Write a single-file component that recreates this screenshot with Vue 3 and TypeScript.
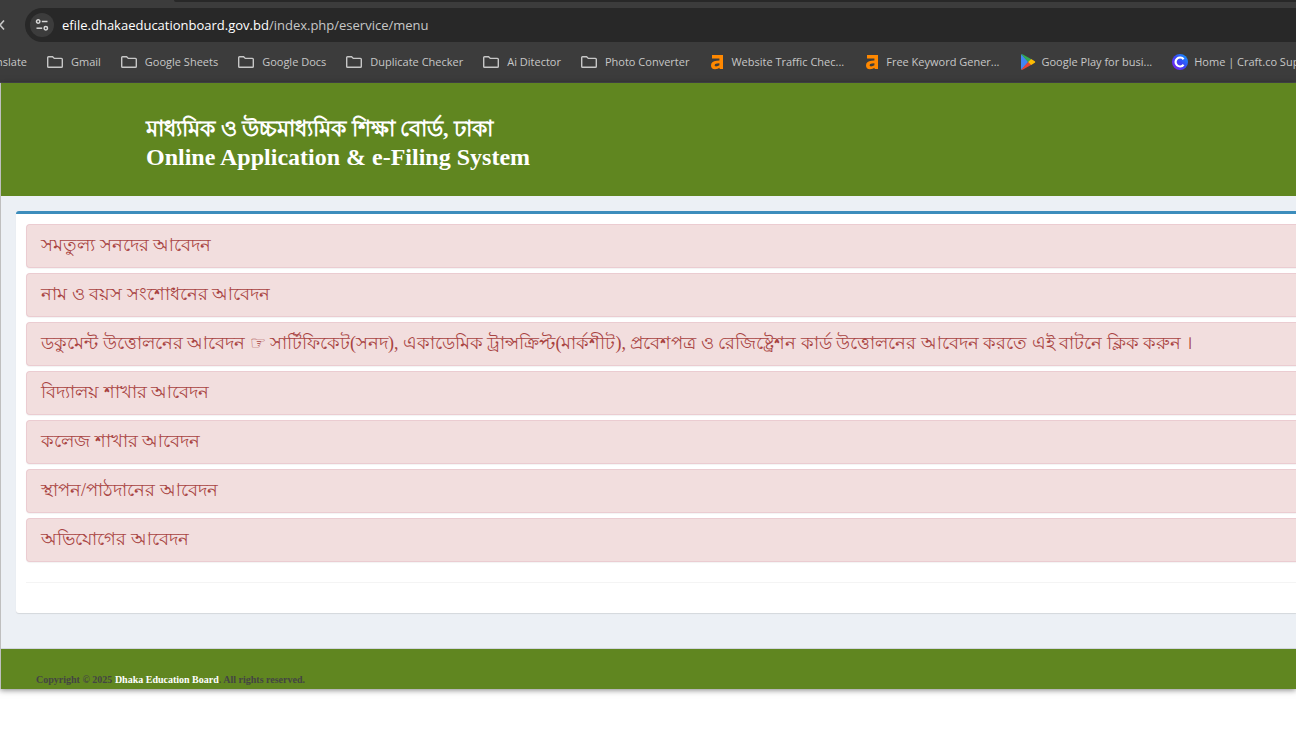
<script setup lang="ts">
type IconKind = 'folder' | 'ahrefs' | 'play' | 'craft'

interface Bookmark {
  label: string
  icon: IconKind
}

const bookmarks: Bookmark[] = [
  { label: 'Gmail', icon: 'folder' },
  { label: 'Google Sheets', icon: 'folder' },
  { label: 'Google Docs', icon: 'folder' },
  { label: 'Duplicate Checker', icon: 'folder' },
  { label: 'Ai Ditector', icon: 'folder' },
  { label: 'Photo Converter', icon: 'folder' },
  { label: 'Website Traffic Chec...', icon: 'ahrefs' },
  { label: 'Free Keyword Gener...', icon: 'ahrefs' },
  { label: 'Google Play for busi...', icon: 'play' },
  { label: 'Home | Craft.co Sup', icon: 'craft' },
]

const services: string[] = [
  'সমতুল্য সনদের আবেদন',
  'নাম ও বয়স সংশোধনের আবেদন',
  'ডকুমেন্ট উত্তোলনের আবেদন ☞ সার্টিফিকেট(সনদ), একাডেমিক ট্রান্সক্রিপ্ট(মার্কশীট), প্রবেশপত্র ও রেজিষ্ট্রেশন কার্ড উত্তোলনের আবেদন করতে এই বাটনে ক্লিক করুন ।',
  'বিদ্যালয় শাখার আবেদন',
  'কলেজ শাখার আবেদন',
  'স্থাপন/পাঠদানের আবেদন',
  'অভিযোগের আবেদন',
]
</script>

<template>
  <div class="screen">
    <div class="chrome">
      <div class="tabstrip"></div>
      <div class="toolbar">
        <button class="back" type="button" aria-label="Back">
          <svg width="6" height="12" viewBox="0 0 6 12"><path d="M4 1.5 L0 6 L4 10.5" /></svg>
        </button>
        <div class="omnibox">
          <button class="site-info" type="button" aria-label="Site information">
            <svg width="14" height="14" viewBox="0 0 14 14">
              <circle cx="3.2" cy="3.5" r="1.7" /><path d="M6.8 3.5 H12.5" />
              <circle cx="10.8" cy="10.2" r="1.7" /><path d="M1.5 10.2 H7.2" />
            </svg>
          </button>
          <span class="url">efile.dhakaeducationboard.gov.bd<span class="path">/index.php/eservice/menu</span></span>
        </div>
      </div>
      <nav class="bookmarks" aria-label="Bookmarks">
        <a class="bookmark" href="#">nslate</a>
        <a v-for="b in bookmarks" :key="b.label" class="bookmark" href="#">
          <svg v-if="b.icon === 'folder'" class="icon folder" viewBox="0 0 16 16">
            <path d="M1.5 2.7 H5.6 L7.3 4.4 H14.4 Q15.3 4.4 15.3 5.3 V12.4 Q15.3 13.3 14.4 13.3 H1.6 Q0.7 13.3 0.7 12.4 V3.5 Q0.7 2.7 1.5 2.7 Z" />
          </svg>
          <svg v-else-if="b.icon === 'ahrefs'" class="icon" viewBox="0 0 16 16">
            <path fill="#ff8800" fill-rule="evenodd" d="M3 1 H14 V15 H10.6 V13.8 Q9 15.2 6 15.2 Q2 15.2 2 11.6 Q2 7.2 7.5 6.8 L10.4 6.6 V4.4 H3 Z M10.4 9.3 L8 9.5 Q5.6 9.8 5.6 11.3 Q5.6 12.4 7 12.4 Q9 12.4 10.4 11.3 Z" />
          </svg>
          <svg v-else-if="b.icon === 'play'" class="icon" viewBox="0 0 16 16">
            <path fill="#4285f4" d="M1 1.6 Q1 0.6 1.8 0.2 L8.2 8 L1.8 15.8 Q1 15.4 1 14.4 Z" />
            <path fill="#34a853" d="M1.2 0.6 Q1.9 -0.2 3 0.4 L11.4 5.2 L8.2 8 Z" />
            <path fill="#ea4335" d="M1.2 15.4 Q1.9 16.2 3 15.6 L11.4 10.8 L8.2 8 Z" />
            <path fill="#fbbc04" d="M11.2 5.1 L14.8 7.2 Q15.8 8 14.8 8.8 L11.2 10.9 L8 8 Z" />
          </svg>
          <svg v-else class="icon" viewBox="0 0 16 16">
            <defs>
              <linearGradient id="craft" x1="1" y1="0" x2="0" y2="1">
                <stop offset="0" stop-color="#0aa0ff" />
                <stop offset="0.5" stop-color="#3b45f5" />
                <stop offset="1" stop-color="#8a1cf0" />
              </linearGradient>
            </defs>
            <circle cx="8" cy="8" r="8" fill="url(#craft)" />
            <path d="M11.6 5.2 A4.5 4.5 0 1 0 11.6 10.8" fill="none" stroke="#fff" stroke-width="2.2" />
          </svg>
          <span>{{ b.label }}</span>
        </a>
      </nav>
    </div>

    <div class="page">
      <header class="banner">
        <h1>মাধ্যমিক ও উচ্চমাধ্যমিক শিক্ষা বোর্ড, ঢাকা<br /><span class="latin">Online Application &amp; e-Filing System</span></h1>
      </header>
      <main class="content">
        <section class="box">
          <a v-for="s in services" :key="s" class="alert" href="#">{{ s }}</a>
          <hr />
        </section>
      </main>
      <footer class="footer">
        <strong>Copyright © 2025 <a href="#">Dhaka Education Board</a>. All rights reserved.</strong>
      </footer>
    </div>
  </div>
</template>

<style>
body {
  margin: 0;
  background: #fff;
}
</style>

<style scoped>
* {
  box-sizing: border-box;
}
.screen {
  min-height: 100vh;
  overflow: hidden;
}
a {
  text-decoration: none;
}
button {
  border: 0;
  padding: 0;
  background: none;
}
.chrome {
  background: #3c3c3c;
  border-bottom: 1px solid #4b4b50;
  font-family: "Open Sans", "Noto Sans", sans-serif;
  overflow: hidden;
}
.tabstrip {
  height: 2px;
  margin-left: 174px;
  background: #282828;
  border-bottom-left-radius: 4px;
}
.toolbar {
  display: flex;
  align-items: center;
  padding-top: 6px;
}
.back {
  width: 25px;
  height: 34px;
  display: flex;
  align-items: center;
}
.back svg {
  fill: none;
  stroke: #c7c7c7;
  stroke-width: 1.6;
}
.omnibox {
  flex: 1;
  height: 34px;
  display: flex;
  align-items: center;
  gap: 8px;
  padding-left: 5px;
  background: #282828;
  border-radius: 17px 0 0 17px;
}
.site-info {
  width: 24px;
  height: 24px;
  border-radius: 50%;
  background: #3c3c3c;
  display: flex;
  align-items: center;
  justify-content: center;
}
.site-info svg {
  fill: none;
  stroke: #d6d6d6;
  stroke-width: 1.5;
}
.url {
  font-size: 13px;
  line-height: 20px;
  color: #fff;
  white-space: nowrap;
}
.path {
  color: #c7c7c7;
}
.bookmarks {
  display: flex;
  align-items: center;
  gap: 20px;
  height: 40px;
  margin-left: -4px;
  white-space: nowrap;
}
.bookmark {
  display: flex;
  align-items: center;
  flex: none;
  gap: 6px;
  font-size: 11px;
  line-height: 16px;
  color: #c7c7c7;
}
.icon {
  width: 16px;
  height: 16px;
  flex: none;
}
.folder {
  margin-right: 2px;
  fill: none;
  stroke: #c7c7c7;
  stroke-width: 1.4;
}
.page {
  border-left: 1px solid #bfbfbf;
  background: #ecf0f5;
  box-shadow: 0 1px 6px rgba(0, 0, 0, 0.5);
}
.banner {
  background: #608620;
  padding: 32px 0 24px 145px;
}
.banner h1 {
  margin: 0;
  font: bold 22px/28px "Liberation Serif", serif;
  color: #fff;
  white-space: nowrap;
}
.latin {
  font-size: 24px;
}
.content {
  padding: 15px 0 35px 15px;
}
.box {
  background: #fff;
  border-top: 3px solid #3c8dbc;
  border-radius: 3px 0 0 3px;
  box-shadow: 0 1px 1px rgba(0, 0, 0, 0.1);
  padding: 10px 0 10px 10px;
}
.alert {
  display: block;
  height: 44px;
  margin-bottom: 5px;
  padding: 6px 14px;
  border: 1px solid #ebccd1;
  border-right: 0;
  border-radius: 4px 0 0 4px;
  background: #f2dede;
  color: #a94442;
  font: 18px/28px "Liberation Serif", serif;
  white-space: nowrap;
  box-shadow: 0 1px 1px rgba(0, 0, 0, 0.05);
}
hr {
  border: 0;
  border-top: 1px solid #f4f4f4;
  margin: 20px 0;
}
.footer {
  background: #608620;
  border-top: 1px solid #d2d6de;
  padding: 23px 35px 2px;
  color: #444;
  font: 10px/15px "Liberation Serif", serif;
}
.footer a {
  color: #fff;
}
</style>
